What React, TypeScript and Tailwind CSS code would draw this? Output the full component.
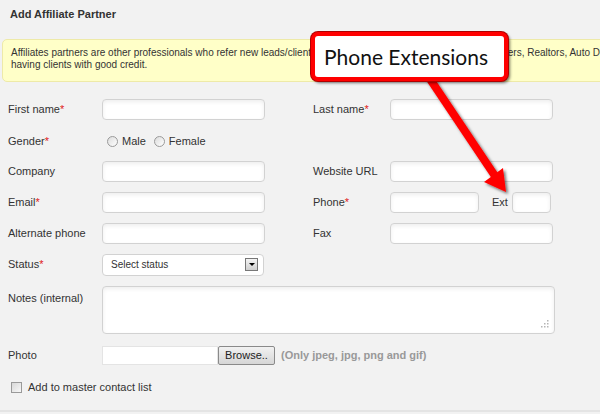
import React from "react";

const inputCls =
  "h-[21px] rounded-[4px] border border-[#d2d2d2] bg-white shadow-[inset_0_2px_4px_rgba(0,0,0,0.07)]";

function Req() {
  return <span className="text-[#e02020]">*</span>;
}

function Label({ children, w }: { children: React.ReactNode; w: string }) {
  return <div className={`${w} shrink-0`}>{children}</div>;
}

function Radio() {
  return (
    <span className="inline-block h-[11px] w-[11px] rounded-full border border-[#9a9a9a] bg-gradient-to-br from-[#dcdcdc] to-white" />
  );
}

export default function App() {
  return (
    <div
      className="relative h-[414px] w-[600px] overflow-hidden bg-[#f2f2f2] text-[11px] text-[#333]"
      style={{ fontFamily: '"Liberation Sans", Arial, sans-serif' }}
    >
      <h1 className="px-[10px] pt-[6px] text-[11px] font-bold text-[#333]">
        Add Affiliate Partner
      </h1>

      <div className="ml-[2px] mt-[16px] h-[43px] w-[620px] rounded-[5px] border border-[#eeeaa8] bg-[#ffffc8] px-[8px] pt-[7px] text-[10px] leading-[12px] text-[#333]">
        <div className="whitespace-nowrap">
          Affiliates partners are other professionals who refer new leads/clients to you, e.g. Mortgage Brokers, Home Lenders, Realtors, Auto Dealers and others
        </div>
        <div>having clients with good credit.</div>
      </div>

      <div className="flex flex-col gap-[10px] px-[8px] pt-[17px]">
        <div className="flex h-[21px] items-center">
          <Label w="w-[94px]">
            First name<Req />
          </Label>
          <div className={`${inputCls} w-[163px]`} />
          <div className="w-[48px]" />
          <Label w="w-[77px]">
            Last name<Req />
          </Label>
          <div className={`${inputCls} w-[163px]`} />
        </div>

        <div className="flex h-[21px] items-center pt-[2px]">
          <Label w="w-[99px]">
            Gender<Req />
          </Label>
          <div className="flex items-center gap-[4px]">
            <Radio />
            <span className="mr-[4px]">Male</span>
            <Radio />
            <span>Female</span>
          </div>
        </div>

        <div className="flex h-[21px] items-center">
          <Label w="w-[94px]">Company</Label>
          <div className={`${inputCls} w-[163px]`} />
          <div className="w-[48px]" />
          <Label w="w-[77px]">Website URL</Label>
          <div className={`${inputCls} w-[163px]`} />
        </div>

        <div className="flex h-[21px] items-center">
          <Label w="w-[94px]">
            Email<Req />
          </Label>
          <div className={`${inputCls} w-[163px]`} />
          <div className="w-[48px]" />
          <Label w="w-[77px]">
            Phone<Req />
          </Label>
          <div className={`${inputCls} w-[89px]`} />
          <span className="ml-[13px] mr-[4px]">Ext</span>
          <div className={`${inputCls} w-[39px]`} />
        </div>

        <div className="flex h-[21px] items-center">
          <Label w="w-[94px]">Alternate phone</Label>
          <div className={`${inputCls} w-[163px]`} />
          <div className="w-[48px]" />
          <Label w="w-[77px]">Fax</Label>
          <div className={`${inputCls} w-[163px]`} />
        </div>

        <div className="flex h-[22px] items-center">
          <Label w="w-[94px]">
            Status<Req />
          </Label>
          <div className="flex h-[22px] w-[162px] items-center justify-between rounded-[4px] border border-[#d2d2d2] bg-white pl-[8px] pr-[5px] text-[10px]">
            <span>Select status</span>
            <span className="flex h-[13px] w-[13px] items-center justify-center border border-[#777] bg-gradient-to-b from-[#f4f4f4] to-[#cfcfcf]">
              <span className="h-0 w-0 border-x-[3px] border-t-[3px] border-x-transparent border-t-black" />
            </span>
          </div>
        </div>

        <div className="flex h-[48px] items-start">
          <Label w="w-[94px] pt-[4px]">Notes (internal)</Label>
          <div className={`${inputCls} relative h-[48px] w-[453px]`}>
            <svg className="absolute bottom-[5px] right-[5px]" width="8" height="8" viewBox="0 0 8 8">
              <g fill="#b5b5b5">
                <rect x="6" y="0" width="1.5" height="1.5" />
                <rect x="3" y="3" width="1.5" height="1.5" />
                <rect x="6" y="3" width="1.5" height="1.5" />
                <rect x="0" y="6" width="1.5" height="1.5" />
                <rect x="3" y="6" width="1.5" height="1.5" />
                <rect x="6" y="6" width="1.5" height="1.5" />
              </g>
            </svg>
          </div>
        </div>

        <div className="mt-[2px] flex h-[19px] items-center">
          <Label w="w-[94px]">Photo</Label>
          <div className="h-[19px] w-[116px] border border-[#e4e4e4] bg-white" />
          <div className="flex h-[19px] w-[57px] items-center justify-center rounded-[2px] border border-[#8a8a8a] bg-gradient-to-b from-[#f2f2f2] to-[#d6d6d6] text-[11px] text-[#222]">
            Browse..
          </div>
          <span className="ml-[6px] font-bold text-[#999]">
            (Only jpeg, jpg, png and gif)
          </span>
        </div>

        <div className="mt-[6px] flex h-[14px] items-center gap-[6px] pl-[3px]">
          <span className="h-[11px] w-[11px] border border-[#9a9a9a] bg-gradient-to-br from-[#d8d8d8] to-[#f8f8f8]" />
          <span>Add to master contact list</span>
        </div>
      </div>

      <div className="absolute bottom-[2px] left-0 h-[2px] w-full bg-[#e4e4e4]" />

      {/* callout annotation */}
      <svg className="pointer-events-none absolute left-0 top-0" width="600" height="414">
        <defs>
          <filter id="ds" x="-20%" y="-20%" width="140%" height="140%">
            <feDropShadow dx="2" dy="2" stdDeviation="1.5" floodColor="#000" floodOpacity="0.55" />
          </filter>
        </defs>
        <g filter="url(#ds)">
          <line x1="428" y1="76" x2="495" y2="176" stroke="#f00" strokeWidth="8" />
          <polygon points="506,192 484,182 503,168" fill="#f00" />
        </g>
      </svg>
      <div className="absolute left-[311px] top-[32px] flex h-[49px] w-[197px] items-center rounded-[7px] border-[4px] border-[#f00] bg-white pl-[9px] shadow-[0_0_0_1px_#b00000,2px_2px_3px_rgba(0,0,0,0.55)]">
        <span
          className="text-[21px] leading-none text-[#111]"
          style={{ fontFamily: "Lato, sans-serif" }}
        >
          Phone Extensions
        </span>
      </div>
    </div>
  );
}
